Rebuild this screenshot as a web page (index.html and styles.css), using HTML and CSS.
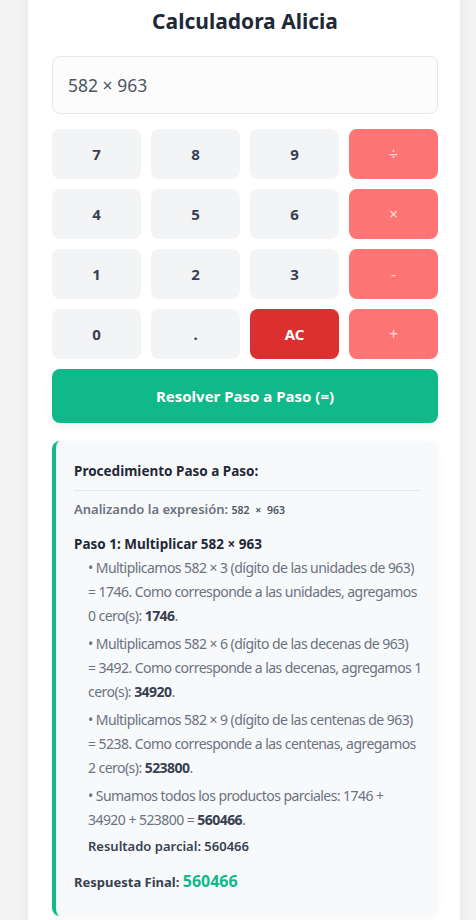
FILE: index.html
```html
<!DOCTYPE html>
<html lang="es">
<head>
<meta charset="utf-8">
<title>Calculadora Alicia</title>
<link rel="stylesheet" href="styles.css">
</head>
<body>
<div class="card">
  <h1 class="title">Calculadora Alicia</h1>
  <div class="display">582 × 963</div>
  <div class="keys">
    <button class="key">7</button>
    <button class="key">8</button>
    <button class="key">9</button>
    <button class="key op">÷</button>
    <button class="key">4</button>
    <button class="key">5</button>
    <button class="key">6</button>
    <button class="key op">×</button>
    <button class="key">1</button>
    <button class="key">2</button>
    <button class="key">3</button>
    <button class="key op">-</button>
    <button class="key">0</button>
    <button class="key">.</button>
    <button class="key clear">AC</button>
    <button class="key op">+</button>
  </div>
  <button class="solve">Resolver Paso a Paso (=)</button>
  <div class="result">
    <h4 class="result-title">Procedimiento Paso a Paso:</h4>
    <p class="analyze">Analizando la expresión: <code class="expr">582 × 963</code></p>
    <p class="step-title">Paso 1: Multiplicar 582 × 963</p>
    <div class="steps">
      <p class="step">• Multiplicamos 582 × 3 (dígito de las unidades de 963)<br>= 1746. Como corresponde a las unidades, agregamos<br>0 cero(s): <b>1746</b>.</p>
      <p class="step">• Multiplicamos 582 × 6 (dígito de las decenas de 963)<br>= 3492. Como corresponde a las decenas, agregamos 1<br>cero(s): <b>34920</b>.</p>
      <p class="step">• Multiplicamos 582 × 9 (dígito de las centenas de 963)<br>= 5238. Como corresponde a las centenas, agregamos<br>2 cero(s): <b>523800</b>.</p>
      <p class="step">• Sumamos todos los productos parciales: 1746 +<br>34920 + 523800 = <b>560466</b>.</p>
      <p class="partial">Resultado parcial: 560466</p>
    </div>
    <p class="final">Respuesta Final: <span class="final-num">560466</span></p>
  </div>
</div>
</body>
</html>
```

FILE: styles.css
```css
* { box-sizing: border-box; }
html, body { margin: 0; padding: 0; }
body {
  background: #f4f4f5;
  font-family: "Noto Sans", "Open Sans", sans-serif;
  color: #1f2937;
  height: 920px;
  overflow: hidden;
}
.card {
  width: 432px;
  margin: -20px 0 0 28px;
  background: #ffffff;
  padding: 26px 22px 40px 24px;
  box-shadow: 0 0 14px rgba(0, 0, 0, 0.07);
  border-radius: 12px;
}
.title {
  margin: 0;
  text-align: center;
  font-size: 21px;
  line-height: 30px;
  font-weight: 700;
  color: #1f2937;
}
.display {
  margin-top: 20px;
  height: 58px;
  border: 1px solid #e5e7eb;
  border-radius: 8px;
  background: #fcfcfc;
  padding-left: 15px;
  display: flex;
  align-items: center;
  font-size: 17.5px;
  color: #4b5563;
}
.keys {
  margin-top: 15px;
  display: grid;
  grid-template-columns: repeat(4, 1fr);
  gap: 10px;
}
.key {
  height: 50px;
  border: none;
  border-radius: 8px;
  background: #f3f4f6;
  font-family: inherit;
  font-size: 15px;
  font-weight: 700;
  color: #374151;
  padding: 0;
}
.key.op {
  background: #ff7474;
  color: #ffdada;
  font-weight: 400;
  font-size: 16px;
}
.key.clear {
  background: #dc2f2f;
  color: #ffffff;
}
.solve {
  display: block;
  width: 100%;
  margin-top: 10px;
  height: 54px;
  border: none;
  border-radius: 8px;
  background: #10b98a;
  color: #ffffff;
  font-family: inherit;
  font-size: 15px;
  font-weight: 700;
  box-shadow: 0 4px 10px rgba(0, 0, 0, 0.06);
}
.result {
  margin-top: 18px;
  background: #f8f9fb;
  border-left: 4px solid #10b98a;
  border-radius: 8px;
  padding: 20px 13px 23px 18px;
  box-shadow: 0 2px 8px rgba(0, 0, 0, 0.03);
}
.result p { margin: 0; }
.result-title {
  margin: 0 4px 0 0;
  font-size: 13.5px;
  line-height: 20px;
  font-weight: 700;
  color: #1f2937;
  padding-bottom: 9px;
  border-bottom: 1px solid #e5e7eb;
}
.analyze {
  margin-top: 8px !important;
  font-size: 13px;
  line-height: 20px;
  font-weight: 600;
  color: #6b7280;
}
.expr {
  font-family: "Noto Sans", sans-serif;
  font-size: 10.5px;
  font-weight: 600;
  color: #4b5563;
  word-spacing: 3px;
}
.step-title {
  margin-top: 14px !important;
  font-size: 13.5px;
  line-height: 20px;
  font-weight: 700;
  color: #1f2937;
}
.steps {
  margin-top: 2px;
  padding-left: 14px;
  display: flex;
  flex-direction: column;
  gap: 4px;
}
.step {
  font-size: 14px;
  line-height: 24px;
  letter-spacing: -0.55px;
  color: #6b7280;
}
.step b {
  color: #374151;
  font-weight: 700;
}
.partial {
  font-size: 13px;
  line-height: 20px;
  font-weight: 600;
  color: #374151;
}
.final {
  margin-top: 14px !important;
  font-size: 13px;
  line-height: 22px;
  font-weight: 700;
  color: #374151;
}
.final-num {
  color: #10b98a;
  font-size: 16px;
}
```
